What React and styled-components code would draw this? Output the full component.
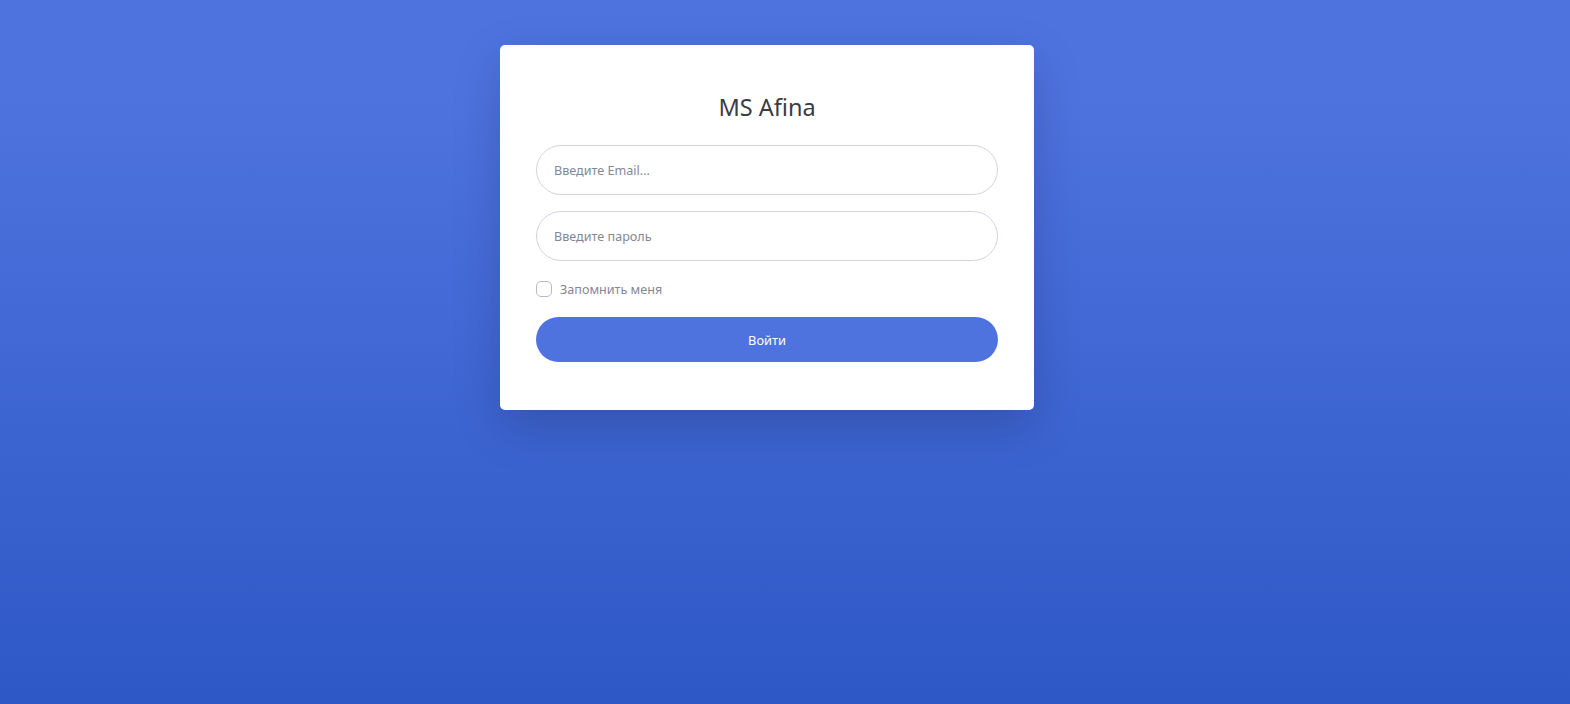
import React, { useState } from 'react';
import styled, { createGlobalStyle } from 'styled-components';

const Global = createGlobalStyle`
  html, body {
    margin: 0;
    padding: 0;
  }
  body {
    min-height: 100vh;
    font-family: "Noto Sans", "Open Sans", sans-serif;
    background: linear-gradient(180deg, #4e73df 96px, #2e58c6 704px);
    background-repeat: no-repeat;
    background-color: #2e58c6;
  }
  * {
    box-sizing: border-box;
  }
`

const Page = styled.div`
  display: flex;
  justify-content: center;
  padding: 45px 36px 0 0;
  min-height: 100vh;
`

const Card = styled.div`
  width: 534px;
  height: 365px;
  background: #fff;
  border-radius: 5px;
  box-shadow: 0 16px 48px rgba(0, 0, 0, 0.175);
  padding: 48px 36px;
  display: flex;
  flex-direction: column;
`

const Title = styled.h1`
  margin: 0 0 23px;
  font-size: 23.5px;
  line-height: 29px;
  font-weight: 400;
  color: #3a3b45;
  text-align: center;
`

const Form = styled.form`
  display: flex;
  flex-direction: column;
`

const Input = styled.input`
  height: 50px;
  width: 100%;
  border: 1px solid #d1d3e2;
  border-radius: 160px;
  padding: 0 16px 0 17px;
  margin-bottom: 16px;
  font-family: inherit;
  font-size: 12.6px;
  color: #6e707e;
  outline: none;

  &::placeholder {
    color: #858796;
  }
`

const CheckRow = styled.label`
  display: flex;
  align-items: center;
  gap: 8px;
  height: 24px;
  margin: 0 0 16px;
  font-size: 12.6px;
  color: #858796;
  cursor: pointer;
`

const Box = styled.span`
  width: 16px;
  height: 16px;
  flex-shrink: 0;
  border: 1px solid #b7b9cc;
  border-radius: 5px;
  background: ${p => (p.$on ? '#4e73df' : '#fff')};
`

const Button = styled.button`
  height: 45px;
  width: 100%;
  border: none;
  border-radius: 160px;
  background: #4e73df;
  color: #fff;
  font-family: inherit;
  font-size: 12.8px;
  cursor: pointer;
`

const App = () => {
  const [remember, setRemember] = useState(false)

  return (
    <>
      <Global />
      <Page>
        <Card>
          <Title>MS Afina</Title>
          <Form onSubmit={e => e.preventDefault()}>
            <Input type="email" placeholder="Введите Email..." />
            <Input type="password" placeholder="Введите пароль" />
            <CheckRow onClick={() => setRemember(!remember)}>
              <Box $on={remember} />
              Запомнить меня
            </CheckRow>
            <Button type="submit">Войти</Button>
          </Form>
        </Card>
      </Page>
    </>
  )
}

export default App;
